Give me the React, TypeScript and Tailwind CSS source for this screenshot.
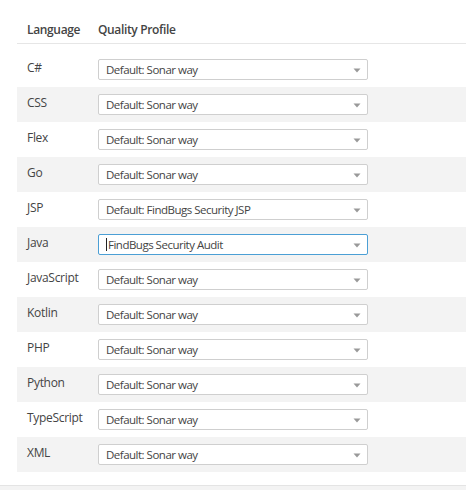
import React from "react";

const rows = [
  { lang: "C#", profile: "Default: Sonar way" },
  { lang: "CSS", profile: "Default: Sonar way" },
  { lang: "Flex", profile: "Default: Sonar way" },
  { lang: "Go", profile: "Default: Sonar way" },
  { lang: "JSP", profile: "Default: FindBugs Security JSP" },
  { lang: "Java", profile: "FindBugs Security Audit", focused: true },
  { lang: "JavaScript", profile: "Default: Sonar way" },
  { lang: "Kotlin", profile: "Default: Sonar way" },
  { lang: "PHP", profile: "Default: Sonar way" },
  { lang: "Python", profile: "Default: Sonar way" },
  { lang: "TypeScript", profile: "Default: Sonar way" },
  { lang: "XML", profile: "Default: Sonar way" },
];

const Caret = () => (
  <svg width="8" height="5" viewBox="0 0 8 5" className="absolute right-[6px] top-[8px]">
    <path d="M0.5 0.5 L7.5 0.5 L4 4.5 Z" fill="#999" />
  </svg>
);

const ProfileSelect = ({ value, focused }: { value: string; focused?: boolean }) => (
  <div
    className={`relative h-[21px] w-[270px] bg-white border rounded-[2px] ${
      focused ? "border-[#4b9fd5]" : "border-[#cfcfcf]"
    }`}
  >
    <div className="flex items-center h-full pl-[7px] text-[11.5px] tracking-[-0.5px] text-[#444] leading-none">
      {focused && <span className="w-px h-[13px] bg-[#222] mr-[1px]" />}
      {value}
    </div>
    <Caret />
  </div>
);

export default function App() {
  return (
    <div
      className="w-[466px] h-[490px] bg-white text-[#444] overflow-hidden flex flex-col"
      style={{ fontFamily: '"Open Sans", "Noto Sans", sans-serif' }}
    >
      <div className="pl-[17px] flex-1">
        <div className="flex h-[44px] items-end pb-[5px] border-b border-[#e6e6e6] text-[12px] tracking-[-0.35px] font-semibold leading-[16px]">
          <div className="w-[81px] pl-[10px]">Language</div>
          <div>Quality Profile</div>
        </div>
        <div className="pt-[8px]">
          {rows.map((r, i) => (
            <div
              key={r.lang}
              className={`flex h-[35px] items-start pt-[7px] ${i % 2 === 1 ? "bg-[#f3f3f3]" : ""}`}
            >
              <div className="w-[81px] pl-[10px] text-[12px] tracking-[-0.3px] leading-[18px]">
                {r.lang}
              </div>
              <ProfileSelect value={r.profile} focused={r.focused} />
            </div>
          ))}
        </div>
      </div>
      <div className="h-[5px] border-t border-[#e4e4e4] bg-[#f3f3f3]" />
    </div>
  );
}
